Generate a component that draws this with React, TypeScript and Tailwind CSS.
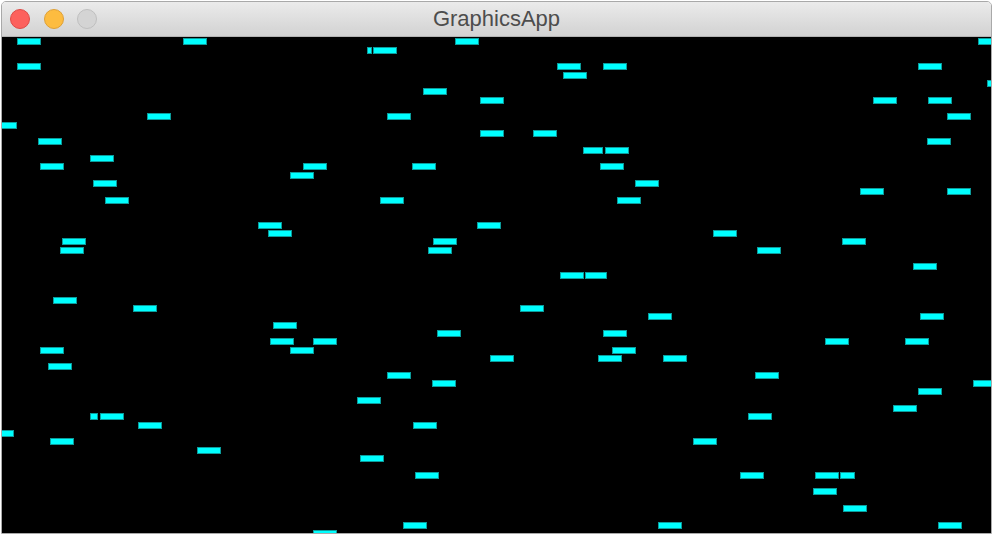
// Blocks on the canvas: [x, y, width?] relative to the canvas' top-left corner
const blocks: [number, number, number?][] = [
  [15, 1], [181, 1], [15, 26], [145, 76], [-9, 85], [36, 101], [88, 118], [38, 126], [91, 143], [103, 160],
  [365, 10, 5], [371, 10], [453, 1], [421, 51], [478, 60], [385, 76], [478, 93], [301, 126], [288, 135], [410, 126], [378, 160],
  [555, 26], [601, 26], [561, 35], [531, 93], [581, 110, 20], [603, 110], [598, 126], [633, 143], [615, 160],
  [976, 1], [916, 26], [985, 43], [871, 60], [926, 60], [945, 76], [925, 101], [858, 151], [945, 151],
  [60, 201], [58, 210], [51, 260], [131, 268], [38, 310], [46, 326],
  [256, 185], [266, 193], [475, 185], [431, 201], [426, 210], [271, 285], [268, 301], [311, 301], [288, 310], [435, 293], [488, 318],
  [711, 193], [558, 235], [583, 235, 22], [518, 268], [646, 276], [601, 293], [610, 310], [596, 318], [661, 318],
  [755, 210], [840, 201], [911, 226], [918, 276], [823, 301], [903, 301],
  [88, 376, 8], [98, 376], [136, 385], [-12, 393], [48, 401], [195, 410],
  [385, 335], [430, 343], [355, 360], [411, 385], [358, 418], [413, 435], [401, 485], [311, 493],
  [691, 401], [738, 435], [656, 485],
  [753, 335], [971, 343], [916, 351], [891, 368], [746, 376], [813, 435], [838, 435, 15], [811, 451], [841, 468], [936, 485],
];

export default function App() {
  return (
    <div className="w-[993px] h-[534px] bg-white pt-[1px] pl-[1px] font-['Liberation_Sans',Arial,sans-serif]">
      <div className="w-[991px] h-[533px] flex flex-col border border-[#a9a9a9] rounded-t-[5px] overflow-hidden">
        {/* title bar */}
        <div className="h-[35px] shrink-0 grid grid-cols-[1fr_auto_1fr] items-center bg-gradient-to-b from-[#ebebeb] to-[#d2d2d2] border-b border-[#b3b3b3]">
          <div className="flex items-center gap-[13.5px] pl-[8px]">
            <div className="w-[20px] h-[20px] rounded-full bg-[#fc615d] border border-[#de4b47]" />
            <div className="w-[20px] h-[20px] rounded-full bg-[#fdbc40] border border-[#dea036]" />
            <div className="w-[20px] h-[20px] rounded-full bg-[#d4d4d4] border border-[#bfbfbf]" />
          </div>
          <span className="text-[22px] leading-none text-[#4d4d4d] pb-[1px]">GraphicsApp</span>
          <div />
        </div>

        {/* canvas */}
        <div className="flex-1 relative bg-black overflow-hidden">
          {blocks.map(([x, y, w], i) => (
            <div
              key={i}
              className="absolute h-[7px] bg-[#00ffff] border border-[#0b9c9c]"
              style={{ left: x, top: y, width: w ?? 24 }}
            />
          ))}
        </div>
      </div>
    </div>
  );
}
